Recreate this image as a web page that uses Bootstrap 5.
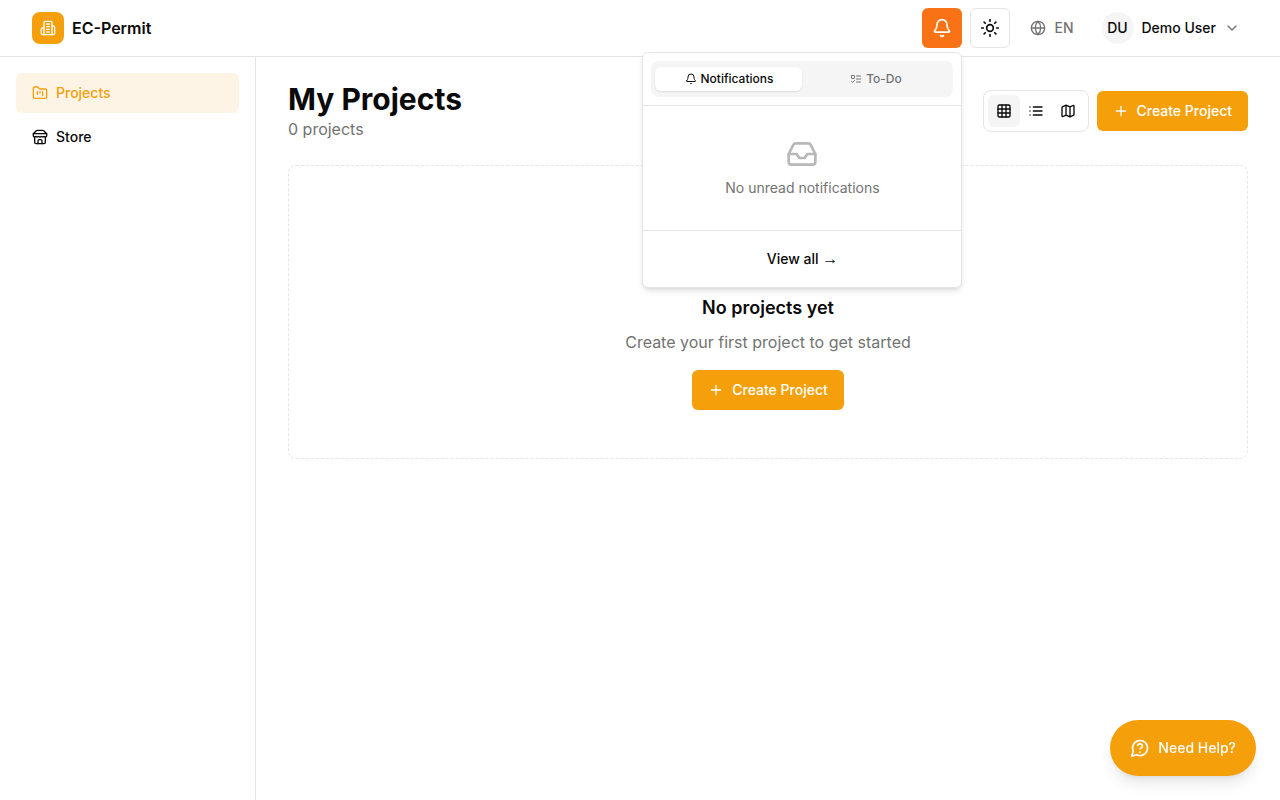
<!DOCTYPE html>
<html lang="en">
<head>
<meta charset="utf-8">
<meta name="viewport" content="width=device-width, initial-scale=1">
<title>EC-Permit</title>
<link href="https://cdn.jsdelivr.net/npm/bootstrap@5.3.0/dist/css/bootstrap.min.css" rel="stylesheet">
<style>
  :root { --amber: #f59f0a; --ink: #0a0a0a; --muted: #737373; --line: #e5e5e5; --soft: #f5f5f5; }
  body { font-family: Inter, "Liberation Sans", sans-serif; font-size: 14px; line-height: 20px; color: var(--ink); background: #fff; }
  svg { fill: none; stroke: currentColor; stroke-width: 2; stroke-linecap: round; stroke-linejoin: round; flex-shrink: 0; }
  .i12 { width: 12px; height: 12px; }
  .i16 { width: 16px; height: 16px; }
  .i20 { width: 20px; height: 20px; }
  .i32 { width: 32px; height: 32px; }
  .i64 { width: 64px; height: 64px; }
  .btn { --bs-btn-font-size: 14px; --bs-btn-line-height: 20px; --bs-btn-font-weight: 500; --bs-btn-border-radius: 6px; --bs-btn-color: var(--ink); height: 40px; display: inline-flex; align-items: center; justify-content: center; gap: 8px; }
  .btn-amber { --bs-btn-color: #fff; --bs-btn-bg: var(--amber); --bs-btn-border-width: 0; --bs-btn-hover-color: #fff; --bs-btn-hover-bg: #e08f05; --bs-btn-padding-x: 16px; }
  .btn-square { width: 40px; --bs-btn-padding-x: 0; }
  .btn-alert { --bs-btn-color: #fff; --bs-btn-bg: #f97316; --bs-btn-border-width: 0; --bs-btn-hover-color: #fff; --bs-btn-hover-bg: #ea670c; }
  .btn-line { --bs-btn-border-color: var(--line); --bs-btn-hover-border-color: var(--line); --bs-btn-hover-bg: var(--soft); }
  .btn-plain { --bs-btn-border-width: 0; --bs-btn-hover-bg: var(--soft); }
  .text-soft { color: var(--muted); }
  .topbar { min-height: 57px; border-bottom: 1px solid var(--line); padding: 0 32px; }
  .brand-name { font-size: 16px; line-height: 24px; font-weight: 600; color: var(--ink); }
  .brand-tile { width: 32px; height: 32px; border-radius: 8px; background: var(--amber); color: #fff; }
  .avatar { width: 32px; height: 32px; background: var(--soft); }
  .side { width: 256px; flex-shrink: 0; border-right: 1px solid var(--line); }
  .side .nav-link { height: 40px; padding: 0 16px; border-radius: 6px; font-weight: 500; color: var(--ink); }
  .side .nav-link.active { background: #fef4e6; color: var(--amber); }
  .page { padding: 24px 32px; min-width: 0; }
  .page-title { font-size: 30px; line-height: 36px; font-weight: 700; }
  .body-line { font-size: 16px; line-height: 24px; }
  .views { border: 1px solid var(--line); border-radius: 8px; padding: 4px; }
  .views .btn { width: 32px; height: 32px; }
  .views .btn.active { background: var(--soft); color: var(--ink); }
  .blank { border: 1px dashed var(--line); border-radius: 8px; }
  .blank-title { font-size: 18px; line-height: 28px; font-weight: 600; }
  .pop { position: absolute; top: 44px; right: 0; z-index: 10; width: 320px; background: #fff; border: 1px solid var(--line); border-radius: 6px; box-shadow: 0 4px 6px -1px rgba(0,0,0,.1), 0 2px 4px -2px rgba(0,0,0,.1); }
  .tabs { height: 36px; padding: 4px; border-radius: 8px; background: var(--soft); }
  .tabs .btn { height: 24px; flex: 1 1 0; gap: 4px; padding: 0 12px; font-size: 12px; line-height: 16px; color: var(--muted); }
  .tabs .btn.active { background: #fff; color: var(--ink); box-shadow: 0 1px 2px rgba(0,0,0,.1); }
  .empty-note { border-top: 1px solid var(--line); border-bottom: 1px solid var(--line); padding: 32px 16px; }
  .faint { opacity: .5; }
  .arrow { font-family: "Liberation Serif", serif; font-size: 16px; line-height: 16px; font-weight: 400; }
  .help { position: fixed; right: 24px; bottom: 24px; height: 56px; --bs-btn-border-radius: 28px; --bs-btn-padding-x: 20px; box-shadow: 0 10px 15px -3px rgba(0,0,0,.1), 0 4px 6px -4px rgba(0,0,0,.1); }
</style>
</head>
<body>
<svg class="d-none" aria-hidden="true">
  <symbol id="bell" viewBox="0 0 24 24"><path d="M10.268 21a2 2 0 0 0 3.464 0"/><path d="M3.262 15.326A1 1 0 0 0 4 17h16a1 1 0 0 0 .74-1.673C19.41 13.956 18 12.499 18 8A6 6 0 0 0 6 8c0 4.499-1.411 5.956-2.738 7.326"/></symbol>
  <symbol id="plus" viewBox="0 0 24 24"><path d="M5 12h14M12 5v14"/></symbol>
  <symbol id="folder" viewBox="0 0 24 24"><path d="M4 20h16a2 2 0 0 0 2-2V8a2 2 0 0 0-2-2h-7.93a2 2 0 0 1-1.66-.9l-.82-1.2A2 2 0 0 0 7.93 3H4a2 2 0 0 0-2 2v13c0 1.1.9 2 2 2Z"/><path d="M8 10v4M12 10v2M16 10v6"/></symbol>
</svg>
<div class="min-vh-100 d-flex flex-column">
  <header class="topbar d-flex align-items-center justify-content-between">
    <a href="#" class="d-flex align-items-center gap-2 text-decoration-none">
      <span class="brand-tile d-flex align-items-center justify-content-center">
        <svg class="i16" viewBox="0 0 24 24"><path d="M6 22V4a2 2 0 0 1 2-2h8a2 2 0 0 1 2 2v18Z"/><path d="M6 12H4a2 2 0 0 0-2 2v6a2 2 0 0 0 2 2h2M18 9h2a2 2 0 0 1 2 2v9a2 2 0 0 1-2 2h-2M10 6h4M10 10h4M10 14h4M10 18h4"/></svg>
      </span>
      <span class="brand-name">EC-Permit</span>
    </a>
    <div class="d-flex align-items-center gap-2">
      <div class="position-relative d-flex">
        <button type="button" class="btn btn-square btn-alert" aria-label="Notifications"><svg class="i20"><use href="#bell"/></svg></button>
        <div class="pop">
          <div class="p-2">
            <div class="tabs d-flex align-items-center" role="tablist">
              <button type="button" class="btn btn-plain active" role="tab" aria-selected="true"><svg class="i12"><use href="#bell"/></svg>Notifications</button>
              <button type="button" class="btn btn-plain" role="tab" aria-selected="false"><svg class="i12" viewBox="0 0 24 24"><rect x="3" y="5" width="6" height="6" rx="1"/><path d="m3 17 2 2 4-4M13 6h8M13 12h8M13 18h8"/></svg>To-Do</button>
            </div>
          </div>
          <div class="empty-note d-flex flex-column align-items-center gap-2 text-soft">
            <svg class="i32 faint" viewBox="0 0 24 24"><path d="M22 12h-6l-2 3h-4l-2-3H2"/><path d="M5.45 5.11 2 12v6a2 2 0 0 0 2 2h16a2 2 0 0 0 2-2v-6l-3.45-6.89A2 2 0 0 0 16.76 4H7.24a2 2 0 0 0-1.79 1.11z"/></svg>
            <span>No unread notifications</span>
          </div>
          <div class="p-2"><button type="button" class="btn btn-plain w-100"><span>View all <span class="arrow">→</span></span></button></div>
        </div>
      </div>
      <button type="button" class="btn btn-square btn-line" aria-label="Theme"><svg class="i20" viewBox="0 0 24 24"><circle cx="12" cy="12" r="4"/><path d="M12 2v2M12 20v2M4.93 4.93l1.41 1.41M17.66 17.66l1.41 1.41M2 12h2M20 12h2M6.34 17.66l-1.41 1.41M19.07 4.93l-1.41 1.41"/></svg></button>
      <button type="button" class="btn btn-plain text-soft"><svg class="i16" viewBox="0 0 24 24"><circle cx="12" cy="12" r="10"/><path d="M12 2a14.5 14.5 0 0 0 0 20 14.5 14.5 0 0 0 0-20M2 12h20"/></svg>EN</button>
      <button type="button" class="btn btn-plain px-2">
        <span class="avatar rounded-circle d-flex align-items-center justify-content-center">DU</span>Demo User
        <svg class="i16 text-soft" viewBox="0 0 24 24"><path d="m6 9 6 6 6-6"/></svg>
      </button>
    </div>
  </header>
  <div class="d-flex flex-grow-1">
    <aside class="side p-3">
      <nav class="nav flex-column gap-1">
        <a href="#" class="nav-link active d-flex align-items-center gap-2"><svg class="i16"><use href="#folder"/></svg>Projects</a>
        <a href="#" class="nav-link d-flex align-items-center gap-2"><svg class="i16" viewBox="0 0 24 24"><path d="m2 7 4.41-4.41A2 2 0 0 1 7.83 2h8.34a2 2 0 0 1 1.42.59L22 7M4 12v8a2 2 0 0 0 2 2h12a2 2 0 0 0 2-2v-8"/><path d="M15 22v-4a2 2 0 0 0-2-2h-2a2 2 0 0 0-2 2v4M2 7h20M22 7v3a2 2 0 0 1-2 2 2.7 2.7 0 0 1-1.59-.63.7.7 0 0 0-.82 0A2.7 2.7 0 0 1 16 12a2.7 2.7 0 0 1-1.59-.63.7.7 0 0 0-.82 0A2.7 2.7 0 0 1 12 12a2.7 2.7 0 0 1-1.59-.63.7.7 0 0 0-.82 0A2.7 2.7 0 0 1 8 12a2.7 2.7 0 0 1-1.59-.63.7.7 0 0 0-.82 0A2.7 2.7 0 0 1 4 12a2 2 0 0 1-2-2V7"/></svg>Store</a>
      </nav>
    </aside>
    <main class="page flex-grow-1">
      <div class="d-flex align-items-center justify-content-between mb-4">
        <div>
          <h1 class="page-title mb-0">My Projects</h1>
          <p class="body-line text-soft mb-0">0 projects</p>
        </div>
        <div class="d-flex align-items-center gap-2">
          <div class="views d-flex" role="group" aria-label="View">
            <button type="button" class="btn btn-square btn-plain active" aria-label="Grid"><svg class="i16" viewBox="0 0 24 24"><rect x="3" y="3" width="18" height="18" rx="2"/><path d="M3 9h18M3 15h18M9 3v18M15 3v18"/></svg></button>
            <button type="button" class="btn btn-square btn-plain" aria-label="List"><svg class="i16" viewBox="0 0 24 24"><path d="M3 6h.01M3 12h.01M3 18h.01M8 6h13M8 12h13M8 18h13"/></svg></button>
            <button type="button" class="btn btn-square btn-plain" aria-label="Map"><svg class="i16" viewBox="0 0 24 24"><path d="M14.106 5.553a2 2 0 0 0 1.788 0l3.659-1.83A1 1 0 0 1 21 4.619v12.764a1 1 0 0 1-.553.894l-4.553 2.277a2 2 0 0 1-1.788 0l-4.212-2.106a2 2 0 0 0-1.788 0l-3.659 1.83A1 1 0 0 1 3 19.381V6.618a1 1 0 0 1 .553-.894l4.553-2.277a2 2 0 0 1 1.788 0zM15 5.764v15M9 3.236v15"/></svg></button>
          </div>
          <button type="button" class="btn btn-amber"><svg class="i16"><use href="#plus"/></svg>Create Project</button>
        </div>
      </div>
      <section class="blank d-flex flex-column align-items-center text-center p-5">
        <svg class="i64 text-soft faint mb-3"><use href="#folder"/></svg>
        <h2 class="blank-title mb-2">No projects yet</h2>
        <p class="body-line text-soft mb-3">Create your first project to get started</p>
        <button type="button" class="btn btn-amber"><svg class="i16"><use href="#plus"/></svg>Create Project</button>
      </section>
    </main>
  </div>
</div>
<button type="button" class="btn btn-amber help"><svg class="i20" viewBox="0 0 24 24"><path d="M7.9 20A9 9 0 1 0 4 16.1L2 22Z"/><path d="M9.09 9a3 3 0 0 1 5.83 1c0 2-3 3-3 3M12 17h.01"/></svg>Need Help?</button>
<script src="https://cdn.jsdelivr.net/npm/bootstrap@5.3.0/dist/js/bootstrap.bundle.min.js"></script>
</body>
</html>
